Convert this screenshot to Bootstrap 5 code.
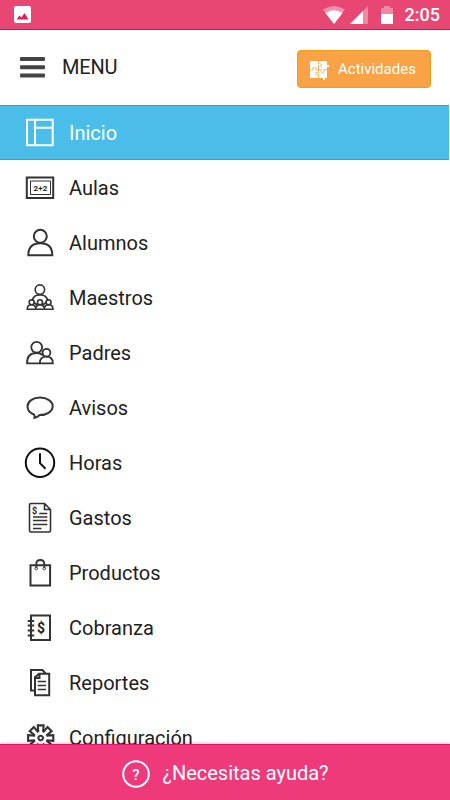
<!DOCTYPE html>
<html lang="es">
<head>
<meta charset="utf-8">
<meta name="viewport" content="width=device-width, initial-scale=1">
<title>Menu</title>
<link href="https://cdn.jsdelivr.net/npm/bootstrap@5.3.0/dist/css/bootstrap.min.css" rel="stylesheet">
<style>
body{font-family:Roboto,"Liberation Sans",sans-serif;color:#212121;height:800px;background:#fff}
svg{display:block;flex:none}
.status{height:30px;background:#e84774;border-bottom:1px solid #dd1255;padding:0 10px 0 14px}
.battery{margin-left:12px}
.clock{font-size:18px;font-weight:500;line-height:30px;margin-left:12px;padding-top:1px}
.topbar{height:75px;padding:0 19px 0 20px}
.title{font-size:20px;line-height:24px;margin:0 0 2px 17px;letter-spacing:-.2px}
.btn-act{width:134px;height:38px;margin-top:2px;background:#f9a346;border:1px solid #f69a1c;border-radius:4px;color:#fff;font-size:15px;padding:2px 0 0 12px}
.btn-act:hover{background:#f0983a;color:#fff}
.menu{min-height:0}
.menu .list-group-item{height:55px;flex:none;padding:0 0 0 24px;border:0;color:#212121;background:#fff;font-size:20px;line-height:24px}
.menu .list-group-item.active{background:#4abde8;color:#fff;margin:0 1px 0 0;border-top:1px solid #22a5d8;border-bottom:1px solid #22a5d8}
.menu svg{margin-right:13px;fill:none;stroke:#333;stroke-width:2}
.menu .active svg{stroke:#fff}
.menu svg text{fill:#222;stroke:none}
.help{height:56px;background:#ee3a7b;border-top:1px solid #dc1560;box-shadow:0 -1px 3px rgba(0,0,0,.2);font-size:20px;padding:2px 0 0 1px;z-index:2}
.help span{margin:0 0 2px 12px}
</style>
<script src="https://cdn.jsdelivr.net/npm/bootstrap@5.3.0/dist/js/bootstrap.bundle.min.js"></script>
</head>
<body class="d-flex flex-column overflow-hidden">
<header class="status d-flex align-items-center text-white flex-shrink-0">
  <svg width="17" height="17" viewBox="0 0 17 17"><rect width="17" height="17" rx="2" fill="#fff"/><path d="M2.500 13.500 5.500 9.500l2 2 3-4.500 4 6.500z" fill="#e21f5c"/></svg>
  <svg class="ms-auto" width="22" height="18" viewBox="0 0 22 18"><path d="M0 3.500Q11-3.500 22 3.500L11 18z" fill="#f391ae"/><path d="M2.500 7Q11 1.500 19.500 7L11 18z" fill="#fff"/></svg>
  <svg class="ms-1" width="20" height="18" viewBox="0 0 20 18"><path d="M1 18 19 0v18z" fill="#f088a6"/><path d="M1 18 14 5v13z" fill="#fff"/></svg>
  <svg class="battery" width="12" height="18" viewBox="0 0 12 18"><path d="M0 2h3V0h6v2h3v7H0z" fill="#f088a6"/><path d="M0 8h12v10H0z" fill="#fff"/></svg>
  <span class="clock">2:05</span>
</header>
<nav class="topbar d-flex align-items-center flex-shrink-0">
  <svg width="25" height="21" viewBox="0 0 25 21" fill="#444"><rect width="25" height="4" rx="1"/><rect y="8.300" width="25" height="4" rx="1"/><rect y="16.500" width="25" height="4" rx="1"/></svg>
  <span class="title">MENU</span>
  <button type="button" class="btn btn-act ms-auto d-flex align-items-center">
    <svg width="20" height="20" viewBox="0 0 20 20"><path d="M0 1h17v4h2v2h-2v11h-2v2h-2v-2H0z" fill="#fff"/><path d="M8.500 1v3q3-1 3 1t-3 1v4H6q1-3-1.500-3T3 10H0M17 9.500h-3q1 3-1.500 3T11 9.500H8.500v3q-3-1-3 1t3 1V18" fill="none" stroke="#f9a346" stroke-width=".8"/></svg>
    <span class="ms-2">Actividades</span>
  </button>
</nav>
<main class="menu list-group list-group-flush flex-grow-1 overflow-hidden">
  <a class="list-group-item active d-flex align-items-center"><svg width="32" height="32"><path d="M3 2.700h25.700v25.600H3zM11 2.700v25.600M11 10.700h17.700"/></svg>Inicio</a>
  <a class="list-group-item d-flex align-items-center"><svg width="32" height="32"><path d="M2.800 5.500h26.400v20.500H2.800z"/><path d="M6.500 9h20v13.500h-20z" stroke-width="1"/><text x="16.400" y="18.700" font-size="8" font-weight="700" text-anchor="middle" textLength="14">2+2</text></svg>Aulas</a>
  <a class="list-group-item d-flex align-items-center"><svg width="32" height="32"><circle cx="16.300" cy="9.300" r="6.500"/><path d="M4.300 28.300Q4.300 16.300 16.300 16.300T28.300 28.300z"/></svg>Alumnos</a>
  <a class="list-group-item d-flex align-items-center"><svg width="32" height="32"><g stroke-width="1.600"><circle cx="15.900" cy="7.600" r="4.700"/><path d="M8.300 19Q9 12.900 16 12.900T23.700 19M10 20.500l4 3M22 20.500l-4 3"/><circle cx="7.700" cy="20.200" r="2.500"/><circle cx="16" cy="20.200" r="2.500"/><circle cx="24.500" cy="20.200" r="2.500"/><path d="M3.200 27.200Q3.200 22.700 7.500 22.700T11.800 27.200Q11.800 22.700 16 22.700T20.300 27.200Q20.300 22.700 24.700 22.700T29 27.200z"/></g></svg>Maestros</a>
  <a class="list-group-item d-flex align-items-center"><svg width="32" height="32"><g stroke-width="1.800"><circle cx="12.700" cy="10.300" r="5.400"/><path d="M15.500 26.300H3Q3 16 12.700 16 16.500 16 19 18.200"/><circle cx="22.500" cy="15.700" r="3.900"/><path d="M15.800 26.300Q15.800 19.700 22.300 19.700T28.900 26.300z"/></g></svg>Padres</a>
  <a class="list-group-item d-flex align-items-center"><svg width="32" height="32"><path d="M10 22.500C5.500 21 3.500 17.800 3.500 14.300 3.500 9.300 9 5.600 16 5.600S28.700 9.300 28.700 14.300 23 23.100 15.500 23.100Q13.500 25.300 10.500 25.800 11 24.300 10 22.500z"/></svg>Avisos</a>
  <a class="list-group-item d-flex align-items-center"><svg width="32" height="32"><g stroke="#111"><circle cx="16" cy="15.700" r="14.200"/><path d="M16 6.200v10l5.500 5.500"/></g></svg>Horas</a>
  <a class="list-group-item d-flex align-items-center"><svg width="32" height="32"><g stroke-width="1.600"><path d="M7 1.500h13.500l6 6V28.500q0 1.500-1.500 1.500H7q-1.500 0-1.500-1.500V3Q5.500 1.500 7 1.500zM20.500 1.500v6h6"/><path d="M15.300 11.500h8M9 15h14.300M9 18.500h14.300M9 22.500h14.300M9 26.500h8.500" stroke-width="1.300"/></g><text x="8" y="11.500" font-size="9" font-weight="700">$</text></svg>Gastos</a>
  <a class="list-group-item d-flex align-items-center"><svg width="32" height="32"><path d="M6.500 8.200h19.600v20.300H6.500z"/><path d="M12.300 11V7Q12.300 3 16.300 3T20.300 7v4" stroke-width="1.800"/><g stroke-width="1"><circle cx="12.300" cy="11.500" r="1.300" fill="#fff"/><circle cx="20.300" cy="11.500" r="1.300" fill="#fff"/></g></svg>Productos</a>
  <a class="list-group-item d-flex align-items-center"><svg width="32" height="32"><path d="M7 3.500h19v24.600H7zM3.700 9h6.500M3.700 13.500h6.500M3.700 18.500h6.500M3.700 23.500h6.500"/><text x="16.900" y="20.700" font-size="14" font-weight="700" text-anchor="middle">$</text></svg>Cobranza</a>
  <a class="list-group-item d-flex align-items-center"><svg width="32" height="32"><g stroke-width="2"><path d="M10.500 23.500H7V3h11.500l3 3.500"/><path d="M11 28.200V10.200l4-3.500h10.200V28.200zM15.500 6.700V11H11"/><path d="M13.700 14.500H22M13.700 18.500H22M13.700 22.500H22" stroke-width="1.500"/></g></svg>Reportes</a>
  <a class="list-group-item d-flex align-items-center"><svg width="32" height="32"><defs><path id="tooth" d="M-2.400-5.800-2.900-12.600H2.900L2.400-5.800"/></defs><g transform="translate(16.700 16)" stroke-width="2.100"><use href="#tooth"/><use href="#tooth" transform="rotate(45)"/><use href="#tooth" transform="rotate(90)"/><use href="#tooth" transform="rotate(135)"/><use href="#tooth" transform="rotate(180)"/><use href="#tooth" transform="rotate(225)"/><use href="#tooth" transform="rotate(270)"/><use href="#tooth" transform="rotate(315)"/><circle r="2.300"/></g></svg>Configuración</a>
</main>
<footer class="help d-flex align-items-center justify-content-center text-white flex-shrink-0">
  <svg width="28" height="28" viewBox="0 0 28 28"><circle cx="14" cy="14" r="12.800" fill="none" stroke="#fff" stroke-width="2"/><text x="14" y="19.500" font-size="15" font-weight="500" text-anchor="middle" fill="#fff">?</text></svg>
  <span>¿Necesitas ayuda?</span>
</footer>
</body>
</html>
